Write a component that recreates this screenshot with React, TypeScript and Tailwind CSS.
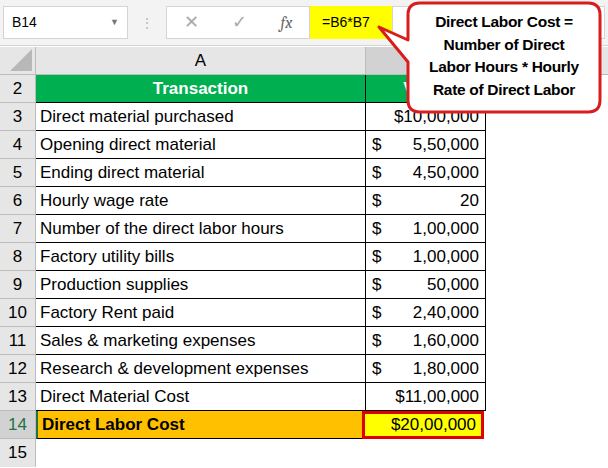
import React from 'react';

const rows: [number, string, string][] = [
  [3, 'Direct material purchased', '10,00,000'],
  [4, 'Opening direct material', '5,50,000'],
  [5, 'Ending direct material', '4,50,000'],
  [6, 'Hourly wage rate', '20'],
  [7, 'Number of the direct labor hours', '1,00,000'],
  [8, 'Factory utility bills', '1,00,000'],
  [9, 'Production supplies', '50,000'],
  [10, 'Factory Rent paid', '2,40,000'],
  [11, 'Sales & marketing expenses', '1,60,000'],
  [12, 'Research & development expenses', '1,80,000'],
  [13, 'Direct Material Cost', '11,00,000'],
];

export default function App() {
  return (
    <div className="relative w-[608px] h-[468px] overflow-hidden bg-white text-black" style={{ fontFamily: '"Liberation Sans", Arial, sans-serif' }}>
      {/* formula bar */}
      <div className="h-[46px] bg-[#f3f3f3] flex items-center px-[3px] border-b border-[#d4d4d4]">
        <div className="w-[125px] h-[33px] bg-white border border-[#d4d4d4] flex items-center justify-between px-2 text-[14px]">
          <span>B14</span>
          <span className="text-[#777] text-[9px]">▼</span>
        </div>
        <div className="w-[38px] text-center text-[#bbb] text-[14px] leading-none">⋮</div>
        <div className="w-[144px] h-[33px] bg-white border border-[#d4d4d4] flex items-center justify-around text-[#aaa] text-[18px]">
          <span>✕</span>
          <span>✓</span>
          <span className="italic text-[#666] font-serif text-[16px]">fx</span>
        </div>
        <div className="w-[82px] h-[33px] bg-[#ffff00] flex items-center pl-3 text-[14px]">=B6*B7</div>
        <div className="flex-1 h-[33px] bg-white border border-[#d4d4d4]"></div>
      </div>
      {/* column header */}
      <div className="flex h-[28px] bg-[#e6e6e6] border-b border-[#bcbcbc] mt-[1px]">
        <div className="w-[36px] border-r border-[#bcbcbc] relative">
          <div className="absolute right-[3px] bottom-[3px] w-0 h-0 border-l-[22px] border-l-transparent border-b-[22px] border-b-[#b8b8b8]"></div>
        </div>
        <div className="w-[330px] border-r border-[#bcbcbc] flex items-center justify-center text-[17px]">A</div>
        <div className="w-[120px] bg-[#d2d2d2] border-r border-[#bcbcbc]"></div>
        <div className="flex-1"></div>
      </div>
      {/* header row 2 */}
      <div className="flex h-[28px]">
        <div className="w-[36px] bg-[#e6e6e6] border-r border-b border-[#bcbcbc] flex items-center justify-center text-[17px]">2</div>
        <div className="w-[330px] bg-[#00b050] border-r border-b border-black text-white font-bold text-[17px] flex items-center justify-center">Transaction</div>
        <div className="w-[120px] bg-[#00b050] border-b border-r border-black text-white font-bold text-[17px] flex items-center justify-center">Value</div>
      </div>
      {rows.map(([n, label, val]) => (
        <div key={n} className="flex h-[28px]">
          <div className="w-[36px] bg-[#e6e6e6] border-r border-b border-[#bcbcbc] flex items-center justify-center text-[17px]">{n}</div>
          <div className="w-[330px] border-r border-b border-black flex items-center pl-1 text-[17px]">{label}</div>
          {val.length > 8 ? (
            <div className="w-[120px] border-b border-r border-black flex items-center justify-end px-[6px] text-[17px]">
              <span>${val}</span>
            </div>
          ) : (
            <div className="w-[120px] border-b border-r border-black flex items-center justify-between px-[6px] text-[17px]">
              <span>$</span>
              <span>{val}</span>
            </div>
          )}
        </div>
      ))}
      <div className="flex h-[28px]">
        <div className="w-[36px] bg-[#d2d2d2] border-r border-b border-[#bcbcbc] flex items-center justify-center text-[17px] text-[#217346]">14</div>
        <div className="w-[330px] bg-[#ffc000] border-b border-black border-l-2 border-l-[#217346] flex items-center pl-1 text-[17px] font-bold">Direct Labor Cost</div>
        <div className="w-[122px] -ml-[4px] bg-[#ffff00] border-[3px] border-[#e00000] flex items-center justify-end px-[5px] text-[17px]">
          <span>$20,00,000</span>
        </div>
      </div>
      <div className="flex h-[28px]">
        <div className="w-[36px] bg-[#e6e6e6] border-r border-[#bcbcbc] flex items-center justify-center text-[17px]">15</div>
      </div>
      {/* callout */}
      <svg className="absolute left-0 top-0" width="608" height="130">
        <path d="M420 3 H588 Q600 3 600 15 V100 Q600 112 588 112 H420 Q408 112 408 100 V62 L379 27 L408 40 V15 Q408 3 420 3 Z" fill="white" stroke="#d91c1c" strokeWidth="3" strokeLinejoin="round" />
      </svg>
      <div className="absolute left-[408px] top-[11px] w-[192px] text-center font-bold text-[15.5px] leading-[22.5px] tracking-[-0.3px]">
        Direct Labor Cost =<br />Number of Direct<br />Labor Hours * Hourly<br />Rate of Direct Labor
      </div>
    </div>
  );
}
